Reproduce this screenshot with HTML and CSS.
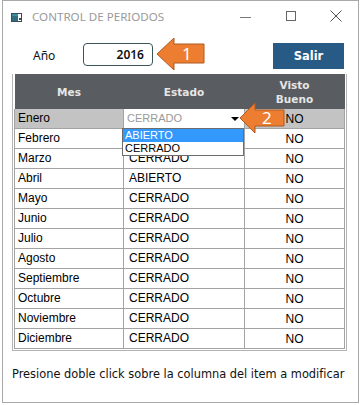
FILE: index.html
```html
<!DOCTYPE html>
<html lang="es">
<head>
<meta charset="utf-8">
<title>CONTROL DE PERIODOS</title>
<link rel="stylesheet" href="styles.css">
</head>
<body>
<div class="window">
  <div class="titlebar">
    <svg class="app-icon" width="11" height="9" viewBox="0 0 11 9">
      <rect x="0.5" y="0.5" width="10" height="8" fill="#fff" stroke="#3a4a5a"/>
      <rect x="1" y="1" width="6" height="7" fill="#2f6f7f"/>
      <rect x="1" y="1" width="6" height="2" fill="#3d8ea0"/>
      <rect x="8" y="5" width="2" height="2" fill="#3a4a5a"/>
    </svg>
    <span class="title">CONTROL DE PERIODOS</span>
    <div class="caption">
      <span class="cap-btn"><span class="min-line"></span></span>
      <span class="cap-btn"><span class="max-box"></span></span>
      <span class="cap-btn">
        <svg width="12" height="12" viewBox="0 0 12 12"><path d="M0.5 0.5 L11.5 11.5 M11.5 0.5 L0.5 11.5" stroke="#555" stroke-width="1"/></svg>
      </span>
    </div>
  </div>

  <div class="toprow">
    <span class="label">Año</span>
    <div class="yearbox">2016</div>
    <button class="salir">Salir</button>
  </div>

  <div class="grid">
    <table>
      <thead>
        <tr>
          <th class="c1">Mes</th>
          <th class="c2">Estado</th>
          <th class="c3">Visto<br>Bueno</th>
        </tr>
      </thead>
      <tbody>
        <tr class="selected"><td>Enero</td><td class="combo-cell"><div class="combo"><span>CERRADO</span><span class="tri"></span></div></td><td class="no">NO</td></tr>
        <tr><td>Febrero</td><td>CERRADO</td><td class="no">NO</td></tr>
        <tr><td>Marzo</td><td>CERRADO</td><td class="no">NO</td></tr>
        <tr><td>Abril</td><td>ABIERTO</td><td class="no">NO</td></tr>
        <tr><td>Mayo</td><td>CERRADO</td><td class="no">NO</td></tr>
        <tr><td>Junio</td><td>CERRADO</td><td class="no">NO</td></tr>
        <tr><td>Julio</td><td>CERRADO</td><td class="no">NO</td></tr>
        <tr><td>Agosto</td><td>CERRADO</td><td class="no">NO</td></tr>
        <tr><td>Septiembre</td><td>CERRADO</td><td class="no">NO</td></tr>
        <tr><td>Octubre</td><td>CERRADO</td><td class="no">NO</td></tr>
        <tr><td>Noviembre</td><td>CERRADO</td><td class="no">NO</td></tr>
        <tr><td>Diciembre</td><td>CERRADO</td><td class="no">NO</td></tr>
      </tbody>
    </table>
  </div>

  <p class="hint">Presione doble click sobre la columna del item a modificar</p>

  <div class="dropdown">
    <div class="opt active">ABIERTO</div>
    <div class="opt">CERRADO</div>
  </div>

  <div class="callout callout-1">
    <svg width="52" height="37" viewBox="0 0 52 37"><polygon points="2,18 19,2 19,8 49,8 49,27 19,27 19,34" fill="#ed7d31" stroke="#ae5a21" stroke-width="1"/></svg>
    <span class="callout-num">1</span>
  </div>
  <div class="callout callout-2">
    <svg width="48" height="34" viewBox="0 0 48 34"><polygon points="2,16 17,1 17,8 46,8 46,24 17,24 17,31" fill="#ed7d31" stroke="#ae5a21" stroke-width="1"/></svg>
    <span class="callout-num">2</span>
  </div>
</div>
</body>
</html>
```

FILE: styles.css
```css
html, body {
  margin: 0;
  padding: 0;
  background: #fff;
}

.window {
  position: relative;
  margin-left: 2px;
  width: 355px;
  height: 401px;
  border: 1px solid #a9a9a9;
  background: #fff;
  font-family: "Noto Sans", sans-serif;
}

.titlebar {
  display: flex;
  align-items: center;
  height: 30px;
  padding-left: 8px;
}

.app-icon {
  display: block;
  margin-top: 2px;
}

.title {
  margin-left: 10px;
  font-size: 11.6px;
  color: #9a9a9a;
  margin-top: 1px;
}

.caption {
  margin-left: auto;
  display: flex;
  align-items: center;
  height: 30px;
}

.cap-btn {
  width: 45px;
  height: 30px;
  display: flex;
  align-items: center;
  justify-content: center;
}

.min-line {
  display: block;
  width: 11px;
  height: 1px;
  background: #777;
  margin-top: 2px;
}

.max-box {
  display: block;
  width: 8px;
  height: 8px;
  border: 1px solid #666;
}

.toprow {
  display: flex;
  align-items: center;
  height: 26px;
  margin-top: 12px;
  padding-left: 30px;
}

.label {
  font-size: 12px;
  color: #111;
  width: 50px;
  margin-top: -2px;
}

.yearbox {
  width: 60px;
  height: 21px;
  border: 1px solid #3b5558;
  border-radius: 4px;
  font-size: 12px;
  font-weight: 600;
  text-align: right;
  padding-right: 8px;
  line-height: 21px;
  color: #111;
  margin-top: -3px;
}

.salir {
  margin-left: auto;
  margin-right: 14px;
  width: 71px;
  height: 26px;
  border: none;
  background: #285a86;
  color: #fff;
  font-family: "DejaVu Sans", sans-serif;
  font-weight: bold;
  font-size: 11.5px;
  padding: 0;
}

.grid {
  margin-left: 9px;
  margin-top: 5px;
  width: 331px;
  border: 1px solid #b4b4b4;
  border-top: none;
  padding: 0 1px 1px 1px;
}

table {
  width: 100%;
  border-collapse: collapse;
  table-layout: fixed;
  font-family: "Liberation Sans", Arial, sans-serif;
  font-size: 12px;
  color: #000;
}

th {
  background: #595c61;
  color: #e6e6e6;
  font-family: "DejaVu Sans", sans-serif;
  font-size: 10.5px;
  font-weight: bold;
  height: 35px;
  padding: 0;
  line-height: 14px;
  text-align: center;
}

th.c1 { width: 109px; }
th.c2 { width: 121px; }

td {
  height: 19px;
  padding: 0 0 0 3px;
  border: 1px solid #a3a3a3;
  white-space: nowrap;
  line-height: 19px;
}

td:nth-child(2) { padding-left: 5px; }

td.no {
  text-align: center;
  padding: 2px 0 0 0;
  line-height: 17px;
  height: 17px;
}

tr.selected td {
  background: #c3c3c3;
}

tbody tr:first-child td { border-top: none; }

td.combo-cell {
  padding: 0;
  background: #c3c3c3;
}

.combo {
  display: flex;
  align-items: center;
  height: 19px;
  background: #fff;
  padding-left: 3px;
  color: #9a9a9a;
  font-size: 11px;
}

.tri {
  margin-left: auto;
  margin-right: 5px;
  width: 0;
  height: 0;
  border-left: 4px solid transparent;
  border-right: 4px solid transparent;
  border-top: 4px solid #000;
}

.hint {
  margin: 16px 0 0 9px;
  font-family: "DejaVu Sans", sans-serif;
  font-size: 11.4px;
  color: #111;
  white-space: nowrap;
}

.dropdown {
  position: absolute;
  left: 119px;
  top: 127px;
  width: 120px;
  border: 1px solid #6c6c6c;
  background: #fff;
  font-family: "Liberation Sans", Arial, sans-serif;
  font-size: 11px;
}

.opt {
  height: 13px;
  line-height: 13px;
  padding-left: 2px;
  color: #000;
}

.opt.active {
  background: #3399ff;
  color: #fff;
}

.callout {
  position: absolute;
}

.callout svg { display: block; }

.callout-1 {
  left: 152px;
  top: 35px;
}

.callout-2 {
  left: 235px;
  top: 101px;
}

.callout-num {
  position: absolute;
  color: #fff;
  font-family: "Noto Sans", sans-serif;
  font-size: 17px;
  line-height: 17px;
  top: 9px;
}

.callout-1 .callout-num { left: 27px; }
.callout-2 .callout-num { left: 24px; top: 7px; }
```
